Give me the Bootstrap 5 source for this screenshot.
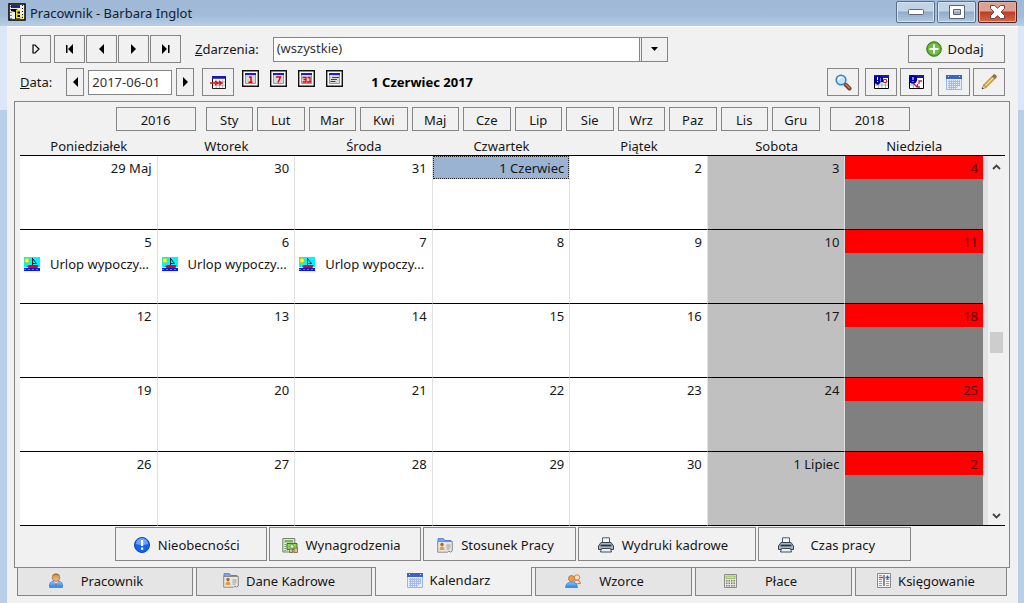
<!DOCTYPE html>
<html lang="pl">
<head>
<meta charset="utf-8">
<meta name="viewport" content="width=device-width, initial-scale=1">
<title>Pracownik - Barbara Inglot</title>
<link href="https://cdn.jsdelivr.net/npm/bootstrap@5.3.0/dist/css/bootstrap.min.css" rel="stylesheet">
<style>
:root{--edge:#858585;--face:#f1f1f1}
body{font:13px/20px "Noto Sans","Open Sans",sans-serif;color:#161616;background:linear-gradient(#dbe7f8 0 110px,#b9cfe9 110px)}
svg{display:block;flex:none}
.titlebar{height:26px;padding:1px 7px 0 8px;background:linear-gradient(#9fb9d6,#a2bcd8 60%,#b7cde8);color:#15202e}
.titlebar h1{font-size:13px;line-height:24px}
.app-icon{margin-top:2px}
.winbtns{gap:2px}
.winbtn{width:39px;height:22px;padding:0;border:1px solid #5c6f88;border-radius:2px;background:linear-gradient(#c3d3e6 0 45%,#91abc9 50%,#b0c8e2);box-shadow:inset 0 0 0 1px #d5e2f0}
.winbtn.shut{background:linear-gradient(#dea092 0 45%,#c03b22 50%,#d06a4c);border-color:#5a2019;box-shadow:inset 0 0 0 1px #e6b0a2}
.client{background:var(--face);margin:0 6px 0 7px;padding:8px 8px 8px 7px;border-top:1px solid #fff}
.toolbar{padding:0 5px 0 6px}
.toolbar+.toolbar{margin-top:5px}
.flat{background:var(--face);border:1px solid var(--edge);border-radius:0;padding:0;color:#161616;font-size:13px;line-height:20px;display:flex;align-items:center;justify-content:center;min-width:0;white-space:nowrap}
.tool{height:28px;width:32px}
.steps{gap:1px}
.nav-step{width:31px}
.nav-step:first-child{margin-right:2px}
.slim{width:18px}
.date-label{margin-right:14px}
.pair{gap:3px}
.pairs{gap:6px}
.add{width:97px;gap:6px;padding-right:4px}
.field{border:1px solid var(--edge);background:#fff;color:#333;padding:0 3px;font-size:13px;height:25px;border-radius:0;min-width:0}
.events-label{margin:0 14px}
.events{width:395px;appearance:none;padding-bottom:2px;background:
 url("data:image/svg+xml,%3Csvg xmlns='http://www.w3.org/2000/svg' width='7' height='4'%3E%3Cpath d='M0 0h7L3.5 4z'/%3E%3C/svg%3E") no-repeat right 9px center,
 linear-gradient(90deg,#858585 1px,#f1f1f1 1px 2px,#858585 2px 3px,#f1f1f1 3px) no-repeat right/28px 100%,#fff}
.date{width:84px}
.minis{gap:11px;padding-top:2px}
.mini{border:0;background:none;padding:0}
.heading{font-size:13px;font-weight:700;color:#000;line-height:20px;padding-left:4px}
.panel{border:1px solid var(--edge);padding:5px 4px 6px 5px;margin-top:5px}
.months{max-width:794px;gap:10px;height:24px}
.months .flat{height:24px;padding-top:1px}
.year{width:80px}
.month{flex:1 1 0}
.calendar{table-layout:fixed;width:100%;border-collapse:separate;border-spacing:0}
.calendar th{font-weight:400;text-align:center;height:25px;line-height:18px;padding:6px 0 0;border-bottom:1px solid #000}
.calendar td{height:74px;padding:0;vertical-align:top;background:#fff;border-right:1px solid #e0e0e0;border-bottom:1px solid #000}
.calendar td:nth-child(6){background:silver}
.calendar td:nth-child(7){background:gray;border-right:0}
.calendar td:nth-child(7) .day{background:red;color:#5c0000}
.day{height:23px;line-height:24px;padding-right:5px;text-align:right}
.calendar .picked{background:#9ab3d2;border:1px dotted #222;line-height:22px;padding-right:4px}
.event{padding:0 4px;height:22px;gap:10px;white-space:nowrap}
.scroller{width:22px;margin-top:24px;border-top:1px solid #000;border-bottom:1px solid #000;padding-left:5px;background:linear-gradient(90deg,#e2e2e2 5px,#f0f0f0 5px)}
.scroller button{border:0;background:none;padding:0;height:22px;width:17px;display:flex;align-items:center;justify-content:center}
.scroller button:last-child{height:18px}
.thumb{width:13px;height:21px;background:#cdcdcd;margin:0 2px}
.actions{max-width:796px;gap:2px;margin-top:1px}
.actions .flat{flex:1 1 152px;height:34px;gap:8px;padding:2px 8px 0 0}
.actions .wide{flex-basis:178px}
.actions .apart{gap:17px;padding-right:16px}
.tabs{gap:3px;padding:0 3px}
.tabs .flat{height:28px;flex:1 1 176px;background:#e5e5e5;border-top:0;text-decoration:none;gap:18px;padding:0 18px 2px 0}
.tabs .mid{flex-basis:157px}
.tabs .last{flex-basis:152px}
.tabs .tight{gap:7px;padding-right:10px}
.tabs .apart{gap:28px;padding-right:26px}
.tabs .active{background:var(--face);height:29px;margin-top:-1px}
</style>
</head>
<body class="min-vh-100 d-flex flex-column">
<svg width="0" height="0" class="position-absolute" aria-hidden="true">
<defs>
<linearGradient id="gBlue" x2="0" y2="1"><stop stop-color="#8ec5ff"/><stop offset="1" stop-color="#2b83dd"/></linearGradient>
<linearGradient id="gSkin" x2="0" y2="1"><stop stop-color="#a8713f"/><stop offset=".35" stop-color="#dc9a5c"/><stop offset="1" stop-color="#f3c68e"/></linearGradient>
<symbol id="boat" viewBox="0 0 16 14"><path fill="#00f5ff" d="M0 0h16v10H0z"/><path fill="#0018f0" d="M0 11h16v3H0z"/><path stroke="#39f" d="M0 12.500h2m2 0h2m2 0h2m2 0h2"/><circle cx="3" cy="3.500" r="2.300" fill="#ff0" stroke="#e8a000" stroke-dasharray="1 1"/><path d="M8.500 1v7M8.500 1.500l4 5h-4" fill="none" stroke="#102030"/><path fill="#e00020" d="M3 9l3-1h8.500l-1 3H4.500z"/></symbol>
<symbol id="page" viewBox="0 0 17 17"><path fill="#fff" stroke="#111" stroke-width="1.400" d="M.7.7h15.600v15.600H.7z"/><path fill="#dcd8d8" stroke="#999" d="M3.500 3.500h10v10h-10z"/><path fill="#1a1ad0" d="M3 3h11v2H3z"/></symbol>
<symbol id="cal" viewBox="0 0 16 15"><path fill="#e7eefb" stroke="#9db5e4" d="M.5.5h15v14H.5z"/><path fill="#3b65c4" d="M0 0h16v4H0z"/><path stroke="#fff" stroke-width=".8" d="M2.500 1v1M13.500 1v1"/><path stroke="#9bb2e2" stroke-width=".8" d="M2 6.500h12M2 8.500h12M2 10.500h12M2 12.500h9M3.500 5v9M5.500 5v9M7.500 5v9M9.500 5v9M11.500 5v7M13.500 5v6"/></symbol>
<symbol id="idcard" viewBox="0 0 16 15"><path fill="#7da7f0" stroke="#4d7fdc" d="M1 3V.7h5.500L8 2.500h6V6H1z"/><path fill="#e6e6e6" stroke="#8b8b8b" d="M.7 3.500h14.600v9.500l-2 1.200-1.300-1.200-1.500 1.200H.7z"/><circle cx="5" cy="6.500" r="1.700" fill="#a96a28"/><path fill="#e0a040" d="M2.500 12c0-5 5-5 5 0z"/><path stroke="#999" d="M9.500 7h4M9.500 9h4M9.500 11h3"/></symbol>
<symbol id="print" viewBox="0 0 16 16"><path fill="#f7fafc" stroke="#4c5966" d="M4.500 7V.8h7V7"/><path fill="#a9b8c6" stroke="#35434f" d="M3 5.500h10l2.500 3.500v3.500H.5V9z"/><path stroke="#2c3844" stroke-width="1.800" d="M2.500 8.500h11"/><path fill="#eef3f7" stroke="#3e4c58" d="M3.500 11.500h9l1 3.500h-11z"/></symbol>
<symbol id="person" viewBox="0 0 14 15"><path fill="url(#gBlue)" stroke="#3a8bd6" stroke-width=".8" d="M.5 14.500v-3Q1 8 7 8t6.500 3.500v3z"/><path fill="#fff" d="M5 8.500l2 3 2-3z"/><path fill="#c33" d="M6.500 9.500h1V12h-1z"/><circle cx="7" cy="4.500" r="3.800" fill="url(#gSkin)" stroke="#a5703d" stroke-width=".8"/></symbol>
<symbol id="users" viewBox="0 0 16 14"><circle cx="12" cy="3.500" r="2.700" fill="#fbe2c2" stroke="#d08040"/><path fill="#ffe9d8" stroke="#e06a4a" d="M9 10q0-4 3-4t3.500 3.500z"/><circle cx="6.500" cy="4.500" r="3" fill="#e8a050" stroke="#b06a28" stroke-width=".8"/><path fill="url(#gBlue)" stroke="#3387da" stroke-width=".8" d="M.5 13.500Q1 8 6.500 8t6 5.500z"/></symbol>
<symbol id="calc" viewBox="0 0 13 14"><path fill="#e6e6e2" stroke="#8d8d87" d="M.5.5h12v13H.5z"/><path fill="#c9ea80" stroke="#8aae54" stroke-width=".7" d="M2 2h9v2.500H2z"/><path stroke="#85857e" stroke-width="1.500" stroke-dasharray="1.500 1" d="M2 6.700h9.500M2 9.200h9.500M2 11.700h9.500"/></symbol>
<symbol id="money" viewBox="0 0 16 15"><path fill="#dfe6da" stroke="#74806e" d="M.8.5h12v13.500H.8z"/><path fill="#7cb95c" d="M2.500 2h8.500v2.500H2.500z"/><path stroke="#739668" stroke-dasharray="1.500 1" d="M2.500 6.500h3M2.500 8.500h3M2.500 10.500h3M2.500 12.500h3"/><path fill="#8bd05b" stroke="#2f7c26" d="M5 5.500h10v6H5z"/><circle cx="10" cy="8.500" r="1.800" fill="#e3ffc8" stroke="#3f8c30" stroke-width=".6"/><path fill="#d9c08a" stroke="#6c5a36" stroke-width=".7" d="M7.500 11h3v3.500h-3zM12 10h3.500v4.500H12z"/></symbol>
<symbol id="ledger" viewBox="0 0 14 15"><path fill="#f4f4f4" stroke="#888" d="M.5.5h13v14H.5z"/><path stroke="#999" d="M2 2.500h3M2 6.500h3M2 8.500h3M2 10.500h3M2 12.500h3M9 6.500h3M9 8.500h3M9 10.500h3M9 12.500h3"/><path stroke="#555" stroke-width="1.300" d="M7 2v11"/><path stroke="#c0392b" stroke-width="1.300" d="M2 4.500h4"/><path stroke="#246bd0" stroke-width="1.300" d="M8.500 4.500h4M10.500 2.500v4"/></symbol>
<symbol id="tri" viewBox="0 0 5 10"><path d="M0 0l5 5-5 5z"/></symbol>
<symbol id="tri-back" viewBox="0 0 5 10"><path d="M5 0v10L0 5z"/></symbol>
<symbol id="grid" viewBox="0 0 15 14"><path fill="#fff" stroke="#000" d="M.5.500h14v13H.5z"/><path stroke="#999" stroke-width=".8" d="M1 6.500h13M1 10h13M4.500 4v9M8 4v9M11.500 4v9"/><path fill="#1818b8" d="M0 0h15v3H0z"/></symbol>
</defs>
</svg>

<header class="titlebar d-flex align-items-start">
 <svg class="app-icon" width="18" height="18" viewBox="0 0 18 18"><path fill="#efefe2" stroke="#000" stroke-width="1.500" d="M1 1h16v16H1z"/><path fill="#2020b8" d="M3 2h9v3H3z"/><path d="M3 6h5l4 2v8H7V9L3 8z"/><path fill="#e6dc24" d="M8 7h4v1.500H9.500v2H12V12H9.500v2h4v-2H15v3.500H8z"/><path stroke="#000" stroke-dasharray="1 2" d="M3 3v13M14.500 2v14"/></svg>
 <h1 class="m-0 ms-1 fw-normal">Pracownik - Barbara Inglot</h1>
 <div class="winbtns ms-auto d-flex">
  <button class="winbtn" aria-label="Minimalizuj"><svg class="mx-auto" width="16" height="6" viewBox="0 0 16 6"><rect x=".5" y=".5" width="15" height="5" rx="1" fill="#fff" stroke="#5b6470"/></svg></button>
  <button class="winbtn" aria-label="Maksymalizuj"><svg class="mx-auto" width="16" height="14" viewBox="0 0 16 14"><path fill="#fff" fill-rule="evenodd" stroke="#5b6470" d="M.5.5h15v13H.5zM4.500 4.500h7v5h-7z"/></svg></button>
  <button class="winbtn shut" aria-label="Zamknij"><svg class="mx-auto" width="17" height="14" viewBox="0 0 17 14"><path fill="#fff" stroke="#6a4542" d="M1.500 .5h4l3 2.700 3-2.700h4v3L12 7l3.500 3.500v3h-4l-3-2.700-3 2.700h-4v-3L5 7 1.500 3.500z"/></svg></button>
 </div>
</header>

<main class="client flex-fill">
 <div class="toolbar d-flex align-items-center">
  <div class="steps d-flex">
   <button class="flat tool nav-step" aria-label="Bieżący"><svg width="8" height="10" viewBox="0 0 8 10"><path fill="none" stroke="#000" stroke-width="1.200" d="M1 1h2l4 4-4 4H1z"/></svg></button>
   <button class="flat tool nav-step" aria-label="Pierwszy"><svg width="8" height="10" viewBox="0 0 8 10"><path d="M0 1h1.500v8H0zM7 0v10L2 5z"/></svg></button>
   <button class="flat tool nav-step" aria-label="Poprzedni"><svg width="5" height="10"><use href="#tri-back"/></svg></button>
   <button class="flat tool nav-step" aria-label="Następny"><svg width="5" height="10"><use href="#tri"/></svg></button>
   <button class="flat tool nav-step" aria-label="Ostatni"><svg width="8" height="10" viewBox="0 0 8 10"><path d="M6 1h1.500v8H6zM0 0l5 5-5 5z"/></svg></button>
  </div>
  <label for="events" class="events-label"><u>Z</u>darzenia:</label>
  <select id="events" class="field events"><option>(wszystkie)</option></select>
  <button class="flat tool add ms-auto"><svg width="16" height="16" viewBox="0 0 16 16"><circle cx="8" cy="8" r="7.300" fill="#57a52d" stroke="#36801a"/><circle cx="8" cy="8" r="6" fill="#72be42"/><path fill="#fff" d="M7 3.500h2V7h3.500v2H9v3.500H7V9H3.500V7H7z"/></svg>Dodaj</button>
 </div>

 <div class="toolbar d-flex align-items-center">
  <label for="date" class="date-label"><u>D</u>ata:</label>
  <button class="flat tool slim" aria-label="Dzień wstecz"><svg width="5" height="10"><use href="#tri-back"/></svg></button>
  <input id="date" class="field date mx-1" value="2017-06-01">
  <button class="flat tool slim" aria-label="Dzień naprzód"><svg width="5" height="10"><use href="#tri"/></svg></button>
  <button class="flat tool mx-2" aria-label="Przejdź do daty"><svg width="16" height="13" viewBox="0 0 16 13"><svg x="2" width="14" height="13"><use href="#grid"/></svg><path stroke="#e01010" stroke-width="1.300" d="M0 7h12M5 5l3 2-3 2M9 5l3 2-3 2" fill="none"/></svg></button>
  <div class="minis d-flex align-self-start">
   <button class="mini" aria-label="Dzień"><svg width="17" height="17" viewBox="0 0 17 17"><use href="#page"/><path fill="none" stroke="#e00000" stroke-width="1.500" d="M7 7h2v5M6.500 12.200h4"/></svg></button>
   <button class="mini" aria-label="Tydzień"><svg width="17" height="17" viewBox="0 0 17 17"><use href="#page"/><path fill="none" stroke="#e00000" stroke-width="1.500" d="M6 7h4.500L8 12.500"/></svg></button>
   <button class="mini" aria-label="Miesiąc"><svg width="17" height="17" viewBox="0 0 17 17"><use href="#page"/><path fill="none" stroke="#e00000" stroke-width="1.300" d="M4.500 7.500H8V12H4.500M5.500 9.700H8M9.500 7.500H12V12M9 12h4"/></svg></button>
   <button class="mini" aria-label="Lista"><svg width="17" height="17" viewBox="0 0 17 17"><use href="#page"/><path stroke="#444" d="M6 7.500h7M5 9.500h6M4.500 11.500h5"/></svg></button>
  </div>
  <h2 class="heading m-0 ms-4">1 Czerwiec 2017</h2>
  <div class="pairs d-flex ms-auto">
   <button class="flat tool" aria-label="Szukaj"><svg width="17" height="17" viewBox="0 0 17 17"><path stroke="#7b3e2a" stroke-width="4" stroke-linecap="round" d="M10.500 10.500l4 4"/><path stroke="#c37a5f" stroke-width="1.500" stroke-linecap="round" d="M11 10.500l3.500 3.500"/><circle cx="6" cy="6" r="4.800" fill="#c3e4ff" stroke="#347fc2" stroke-width="1.500"/><path stroke="#fff" stroke-width="1.500" d="M3.500 6q0-2.500 3-2.700" fill="none"/></svg></button>
   <div class="pair d-flex">
    <button class="flat tool" aria-label="Nieobecność"><svg width="15" height="14" viewBox="0 0 15 14"><use href="#grid"/><path fill="#0000a8" d="M0 1h6.500v7L3.500 10 .5 8zM7 2h2v5H7z"/><path fill="#fff" d="M3 2h1v3H3zM3 6h1v1H3z"/><path fill="#fff" stroke="#b02040" d="M9.500 4.500h3v3h-3z"/></svg></button>
    <button class="flat tool" aria-label="Zmień nieobecność"><svg width="15" height="14" viewBox="0 0 15 14"><use href="#grid"/><path fill="#fff" d="M5 4h9v9H5z"/><circle cx="4" cy="4.500" r="4.200" fill="#0000a8"/><path fill="#fff" d="M3.500 2h1v3h-1zM3.500 6h1v1h-1z"/><path stroke="#c02040" stroke-width="1.300" fill="none" d="M13 6h-3v3M5 9l3 3M8.500 9v3H11"/></svg></button>
   </div>
   <div class="pair d-flex">
    <button class="flat tool" aria-label="Kalendarz"><svg width="16" height="15"><use href="#cal"/></svg></button>
    <button class="flat tool" aria-label="Edytuj"><svg width="16" height="16" viewBox="0 0 16 16"><path fill="#e8b83e" stroke="#92681e" stroke-width=".8" d="M2.500 11L11.500 2l2.500 2.500L5 13.500z"/><path stroke="#ffe28b" d="M4 12l8.500-8.500"/><path fill="#f2d4aa" stroke="#92681e" stroke-width=".6" d="M2.500 11L5 13.500 1 15z"/><path d="M1 15l.5-1.500 1 1z"/><path fill="#a87452" stroke="#714a30" stroke-width=".7" d="M11.500 2L13 .6Q15 .5 15.400 3L14 4.500z"/></svg></button>
   </div>
  </div>
 </div>

 <section class="panel">
  <div class="months d-flex mx-auto">
   <button class="flat year">2016</button>
   <div class="d-flex flex-fill gap-1">
    <button class="flat month">Sty</button><button class="flat month">Lut</button><button class="flat month">Mar</button><button class="flat month">Kwi</button><button class="flat month">Maj</button><button class="flat month">Cze</button><button class="flat month">Lip</button><button class="flat month">Sie</button><button class="flat month">Wrz</button><button class="flat month">Paz</button><button class="flat month">Lis</button><button class="flat month">Gru</button>
   </div>
   <button class="flat year">2018</button>
  </div>
  <div class="d-flex">
   <table class="calendar">
    <thead><tr><th>Poniedziałek</th><th>Wtorek</th><th>Środa</th><th>Czwartek</th><th>Piątek</th><th>Sobota</th><th>Niedziela</th></tr></thead>
    <tbody>
     <tr><td><div class="day">29 Maj</div></td><td><div class="day">30</div></td><td><div class="day">31</div></td><td><div class="day picked">1 Czerwiec</div></td><td><div class="day">2</div></td><td><div class="day">3</div></td><td><div class="day">4</div></td></tr>
     <tr><td><div class="day">5</div><div class="event d-flex align-items-center"><svg width="16" height="14"><use href="#boat"/></svg>Urlop wypoczy...</div></td><td><div class="day">6</div><div class="event d-flex align-items-center"><svg width="16" height="14"><use href="#boat"/></svg>Urlop wypoczy...</div></td><td><div class="day">7</div><div class="event d-flex align-items-center"><svg width="16" height="14"><use href="#boat"/></svg>Urlop wypoczy...</div></td><td><div class="day">8</div></td><td><div class="day">9</div></td><td><div class="day">10</div></td><td><div class="day">11</div></td></tr>
     <tr><td><div class="day">12</div></td><td><div class="day">13</div></td><td><div class="day">14</div></td><td><div class="day">15</div></td><td><div class="day">16</div></td><td><div class="day">17</div></td><td><div class="day">18</div></td></tr>
     <tr><td><div class="day">19</div></td><td><div class="day">20</div></td><td><div class="day">21</div></td><td><div class="day">22</div></td><td><div class="day">23</div></td><td><div class="day">24</div></td><td><div class="day">25</div></td></tr>
     <tr><td><div class="day">26</div></td><td><div class="day">27</div></td><td><div class="day">28</div></td><td><div class="day">29</div></td><td><div class="day">30</div></td><td><div class="day">1 Lipiec</div></td><td><div class="day">2</div></td></tr>
    </tbody>
   </table>
   <div class="scroller d-flex flex-column">
    <button aria-label="Przewiń w górę"><svg width="9" height="6" viewBox="0 0 9 6"><path fill="none" stroke="#444" stroke-width="1.800" d="M1 5l3.500-3.500L8 5"/></svg></button>
    <div class="thumb my-auto"></div>
    <button aria-label="Przewiń w dół"><svg width="9" height="6" viewBox="0 0 9 6"><path fill="none" stroke="#444" stroke-width="1.800" d="M1 1l3.500 3.500L8 1"/></svg></button>
   </div>
  </div>
  <div class="actions d-flex mx-auto">
   <button class="flat"><svg width="16" height="16" viewBox="0 0 16 16"><circle cx="8" cy="8" r="7.500" fill="#1764e8" stroke="#0b45b8"/><path fill="#6aa5fb" d="M2 7a6 6 0 0112 0Q8 9 2 7z"/><path fill="#fff" d="M7 3h2.200v6H7zM7 10.500h2.200v2.200H7z"/></svg>Nieobecności</button>
   <button class="flat"><svg width="16" height="15"><use href="#money"/></svg>Wynagrodzenia</button>
   <button class="flat"><svg width="16" height="15"><use href="#idcard"/></svg>Stosunek Pracy</button>
   <button class="flat wide"><svg width="16" height="16"><use href="#print"/></svg>Wydruki kadrowe</button>
   <button class="flat apart"><svg width="16" height="16"><use href="#print"/></svg>Czas pracy</button>
  </div>
 </section>
 <nav class="tabs d-flex align-items-start">
  <a href="#" class="flat"><svg width="14" height="15"><use href="#person"/></svg>Pracownik</a>
  <a href="#" class="flat tight"><svg width="16" height="15"><use href="#idcard"/></svg>Dane Kadrowe</a>
  <a href="#" class="flat mid tight active" aria-current="page"><svg width="16" height="15"><use href="#cal"/></svg>Kalendarz</a>
  <a href="#" class="flat mid"><svg width="16" height="14"><use href="#users"/></svg>Wzorce</a>
  <a href="#" class="flat mid apart"><svg width="13" height="14"><use href="#calc"/></svg>Płace</a>
  <a href="#" class="flat last tight"><svg width="14" height="15"><use href="#ledger"/></svg>Księgowanie</a>
 </nav>
</main>
<script src="https://cdn.jsdelivr.net/npm/bootstrap@5.3.0/dist/js/bootstrap.bundle.min.js"></script>
</body>
</html>
